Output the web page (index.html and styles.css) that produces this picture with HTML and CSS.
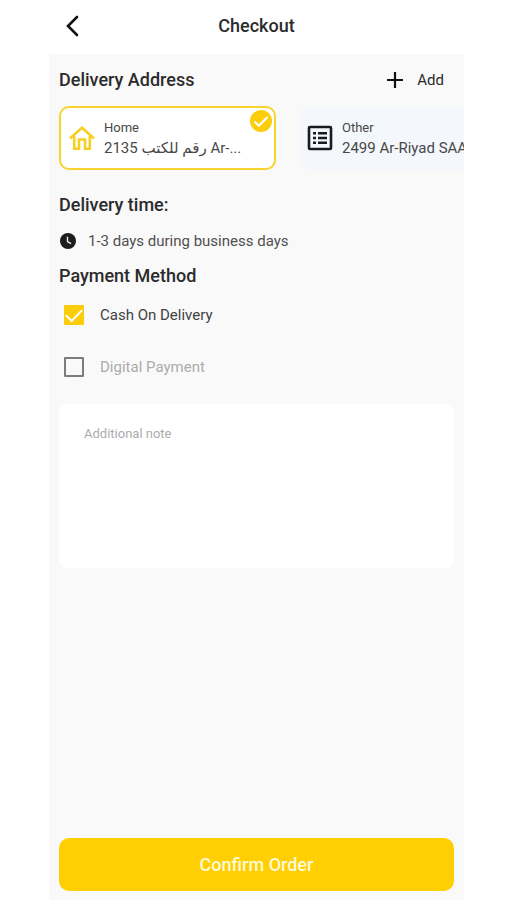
FILE: index.html
```html
<!DOCTYPE html>
<html lang="en">
<head>
<meta charset="utf-8">
<meta name="viewport" content="width=device-width, initial-scale=1">
<title>Checkout</title>
<link rel="stylesheet" href="styles.css">
</head>
<body>
<div class="app">
  <header class="topbar">
    <button class="back" type="button" aria-label="Back">
      <svg width="14" height="22" viewBox="0 0 14 22"><path d="M12 2 3 11l9 9" fill="none" stroke="#111" stroke-width="2.6" stroke-linecap="round"/></svg>
    </button>
    <h1 class="title">Checkout</h1>
  </header>
  <main class="content">
    <div class="section-head">
      <h2 class="heading">Delivery Address</h2>
      <button class="add" type="button">
        <svg width="16" height="16" viewBox="0 0 16 16"><path d="M8 0v16M0 8h16" stroke="#111" stroke-width="2.2"/></svg>
        Add
      </button>
    </div>
    <div class="addresses">
      <button class="address selected" type="button">
        <svg width="26" height="26" viewBox="0 0 26 26"><path d="M1 13.500 13 2.800l12 10.700M5.200 11v12.700H10V14.500h6v9.200h4.800V11" fill="none" stroke="#f8cf21" stroke-width="2.600"/></svg>
        <span class="address-text">
          <span class="address-label">Home</span>
          <span class="address-line">2135 رقم للكتب Ar-...</span>
        </span>
        <svg class="badge" width="22" height="22" viewBox="0 0 22 22"><circle cx="11" cy="11" r="11" fill="#fccd0a"/><path d="m4.500 11.500 4.300 4.200 8.700-8.700" fill="none" stroke="#fff" stroke-width="2.200"/></svg>
      </button>
      <button class="address" type="button">
        <svg width="26" height="26" viewBox="0 0 26 26"><rect x="2" y="2" width="22" height="22" rx="1" fill="none" stroke="#1b1b1f" stroke-width="2.600"/><path d="M6 8.200h3M6 13h3M6 17.800h3M11 8.200h9M11 13h9M11 17.800h9" stroke="#1b1b1f" stroke-width="2.400"/></svg>
        <span class="address-text">
          <span class="address-label">Other</span>
          <span class="address-line">2499 Ar-Riyad SAA</span>
        </span>
      </button>
    </div>
    <h2 class="heading time-heading">Delivery time:</h2>
    <p class="time">
      <svg width="16" height="16" viewBox="0 0 16 16"><circle cx="8" cy="8" r="8" fill="#1c1c1c"/><path d="M7.500 3.800V8.500l3.600 2.200" fill="none" stroke="#eee" stroke-width="1.400"/></svg>
      1-3 days during business days
    </p>
    <h2 class="heading">Payment Method</h2>
    <label class="option"><input class="check" type="checkbox" checked>Cash On Delivery</label>
    <label class="option muted"><input class="check" type="checkbox">Digital Payment</label>
    <textarea class="note" placeholder="Additional note" aria-label="Additional note"></textarea>
    <button class="confirm" type="button">Confirm Order</button>
  </main>
</div>
</body>
</html>
```
FILE: styles.css
```css
* { box-sizing: border-box; }
body {
  margin: 0;
  padding: 0 43px 0 49px;
  background: #fff;
  color: #2b2b2b;
  font-family: Roboto, "Noto Sans", "DejaVu Sans", sans-serif;
  font-size: 15px;
  line-height: 20px;
}
button {
  border: 0;
  padding: 0;
  background: none;
  color: inherit;
  font: inherit;
  cursor: pointer;
}
svg { display: block; flex: none; }
.app { display: flex; flex-direction: column; min-height: 100vh; }
.topbar {
  display: grid;
  grid-template-columns: 30px 1fr 30px;
  align-items: center;
  height: 54px;
  padding-bottom: 2px;
}
.back { justify-self: end; }
.title { margin: 0; font-size: 18px; font-weight: 500; text-align: center; }
.content {
  flex: 1;
  display: flex;
  flex-direction: column;
  padding: 10px 10px 9px;
  background: #f9f9f9;
}
.heading { margin: 0; font-size: 18px; font-weight: 500; line-height: 24px; }
.section-head {
  display: flex;
  justify-content: space-between;
  align-items: center;
  height: 32px;
  padding-right: 10px;
}
.add { display: flex; align-items: center; gap: 14px; }
.addresses {
  display: flex;
  gap: 24px;
  margin: 10px -10px 0 0;
  overflow: hidden;
}
.address {
  position: relative;
  display: flex;
  align-items: center;
  gap: 9px;
  flex: 0 0 217px;
  height: 64px;
  padding: 0 7px;
  border-radius: 10px;
  background: #f4f7fc;
  color: #484848;
  text-align: left;
  white-space: nowrap;
}
.address.selected {
  padding: 0 8px;
  border: 2px solid #f8d22e;
  background: #fff;
}
.address-text { display: flex; flex-direction: column; }
.address-label { font-size: 13px; }
.badge { position: absolute; top: 2px; right: 2px; }
.time-heading { margin-top: 23px; }
.time {
  display: flex;
  align-items: center;
  gap: 12px;
  margin: 14px 0 13px 1px;
  color: #505050;
}
.option {
  display: flex;
  align-items: center;
  gap: 16px;
  height: 52px;
  padding-left: 5px;
  color: #424242;
}
.option:first-of-type { margin-top: 1px; }
.muted { color: #acacac; }
.check {
  appearance: none;
  display: grid;
  place-items: center;
  width: 20px;
  height: 20px;
  margin: 0;
  border: 2px solid #7c7c7c;
  border-radius: 1px;
}
.check:checked { border-color: #fccd0a; background: #fccd0a; }
.check:checked::before {
  content: "";
  width: 14px;
  height: 7px;
  margin-bottom: 4px;
  border: solid #fff;
  border-width: 0 0 2px 2px;
  transform: rotate(-45deg);
}
.note {
  height: 164px;
  margin-top: 11px;
  padding: 20px 25px;
  border: 0;
  border-radius: 8px;
  background: #fff;
  color: inherit;
  font: inherit;
  font-size: 13px;
  resize: none;
}
.note::placeholder { color: #acacac; opacity: 1; }
.confirm {
  height: 53px;
  margin-top: auto;
  border-radius: 10px;
  background: #ffcf03;
  color: #fffbd8;
  font-size: 18px;
  font-weight: 500;
}
```
